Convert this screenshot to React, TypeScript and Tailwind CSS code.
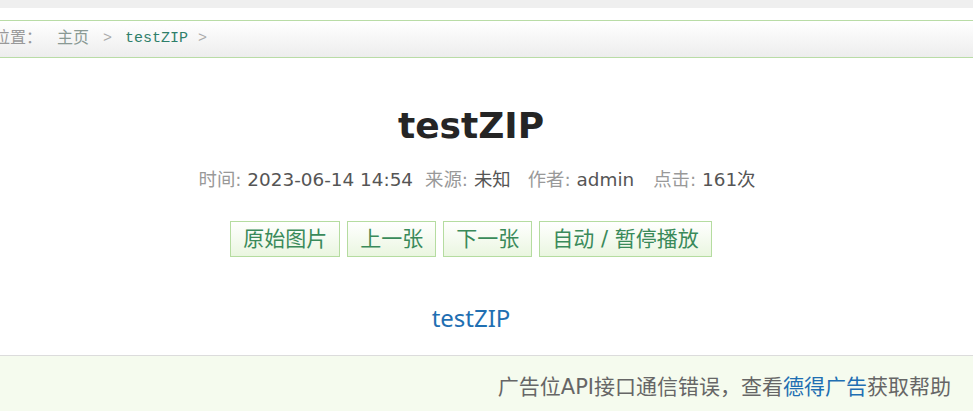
import React from 'react';

const cjk = '"DejaVu Sans", "Noto Sans CJK SC", sans-serif';

const Crumbs = () => (
  <div className="h-[38px] border-y border-[#b9dca6] bg-gradient-to-b from-white to-[#ededed] flex items-center overflow-hidden">
    <div
      className="ml-[-38px] flex items-center text-[16px] text-[#999] whitespace-nowrap"
      style={{ fontFamily: '"Liberation Mono", "Noto Sans CJK SC", monospace' }}
    >
      <span>当前位置：</span>
      <span className="ml-[15px] text-[#8a9a94]">主页</span>
      <span className="ml-[14px] text-[15px] text-[#aaa]">&gt;</span>
      <span className="ml-[13px] text-[15px] text-[#2f7f6a]">testZIP</span>
      <span className="ml-[10px] text-[15px] text-[#aaa]">&gt;</span>
    </div>
  </div>
);

const Meta = ({ label, value, gap }: { label: string; value: string; gap?: string }) => (
  <span className={gap}>
    <span className="text-[#999]">{label}: </span>
    <span className="text-[#555]">{value}</span>
  </span>
);

const buttons = ['原始图片', '上一张', '下一张', '自动 / 暂停播放'];

export default function App() {
  return (
    <div className="w-[973px] h-[411px] bg-white overflow-hidden" style={{ fontFamily: cjk }}>
      <div className="h-[8px] bg-[#efefef]" />
      <div className="h-[12px]" />
      <Crumbs />

      <div className="flex flex-col items-center pr-[31px]">
        <h1 className="mt-[48px] text-[36px] leading-[40px] font-bold text-[#252525]">testZIP</h1>
        <div className="mt-[23px] ml-[12px] text-[18.4px] leading-[22px] whitespace-nowrap">
          <Meta label="时间" value="2023-06-14 14:54" />
          <Meta label="来源" value="未知" gap="ml-[12px]" />
          <Meta label="作者" value="admin" gap="ml-[17px]" />
          <Meta label="点击" value="161次" gap="ml-[19px]" />
        </div>
        <div className="mt-[30px] flex gap-[7px]">
          {buttons.map((b) => (
            <button
              key={b}
              className="h-[36px] px-[12px] border border-[#b5dca0] bg-gradient-to-b from-white to-[#eaf6e0] text-[21px] leading-[34px] text-[#3a8a5a]"
            >
              {b}
            </button>
          ))}
        </div>
        <a className="mt-[47px] text-[24px] leading-[28px] text-[#1f6fb2]" style={{ fontFamily: '"Noto Sans", sans-serif' }}>
          testZIP
        </a>
      </div>

      <div className="mt-[23px] h-[60px] border-t border-[#dcdcdc] bg-[#f5fbee] flex justify-end pt-[17px] pr-[22px]">
        <span className="text-[21px] leading-[28px] text-[#666]">
          广告位API接口通信错误，查看<a className="text-[#1f6fb2]">德得广告</a>获取帮助
        </span>
      </div>
    </div>
  );
}
